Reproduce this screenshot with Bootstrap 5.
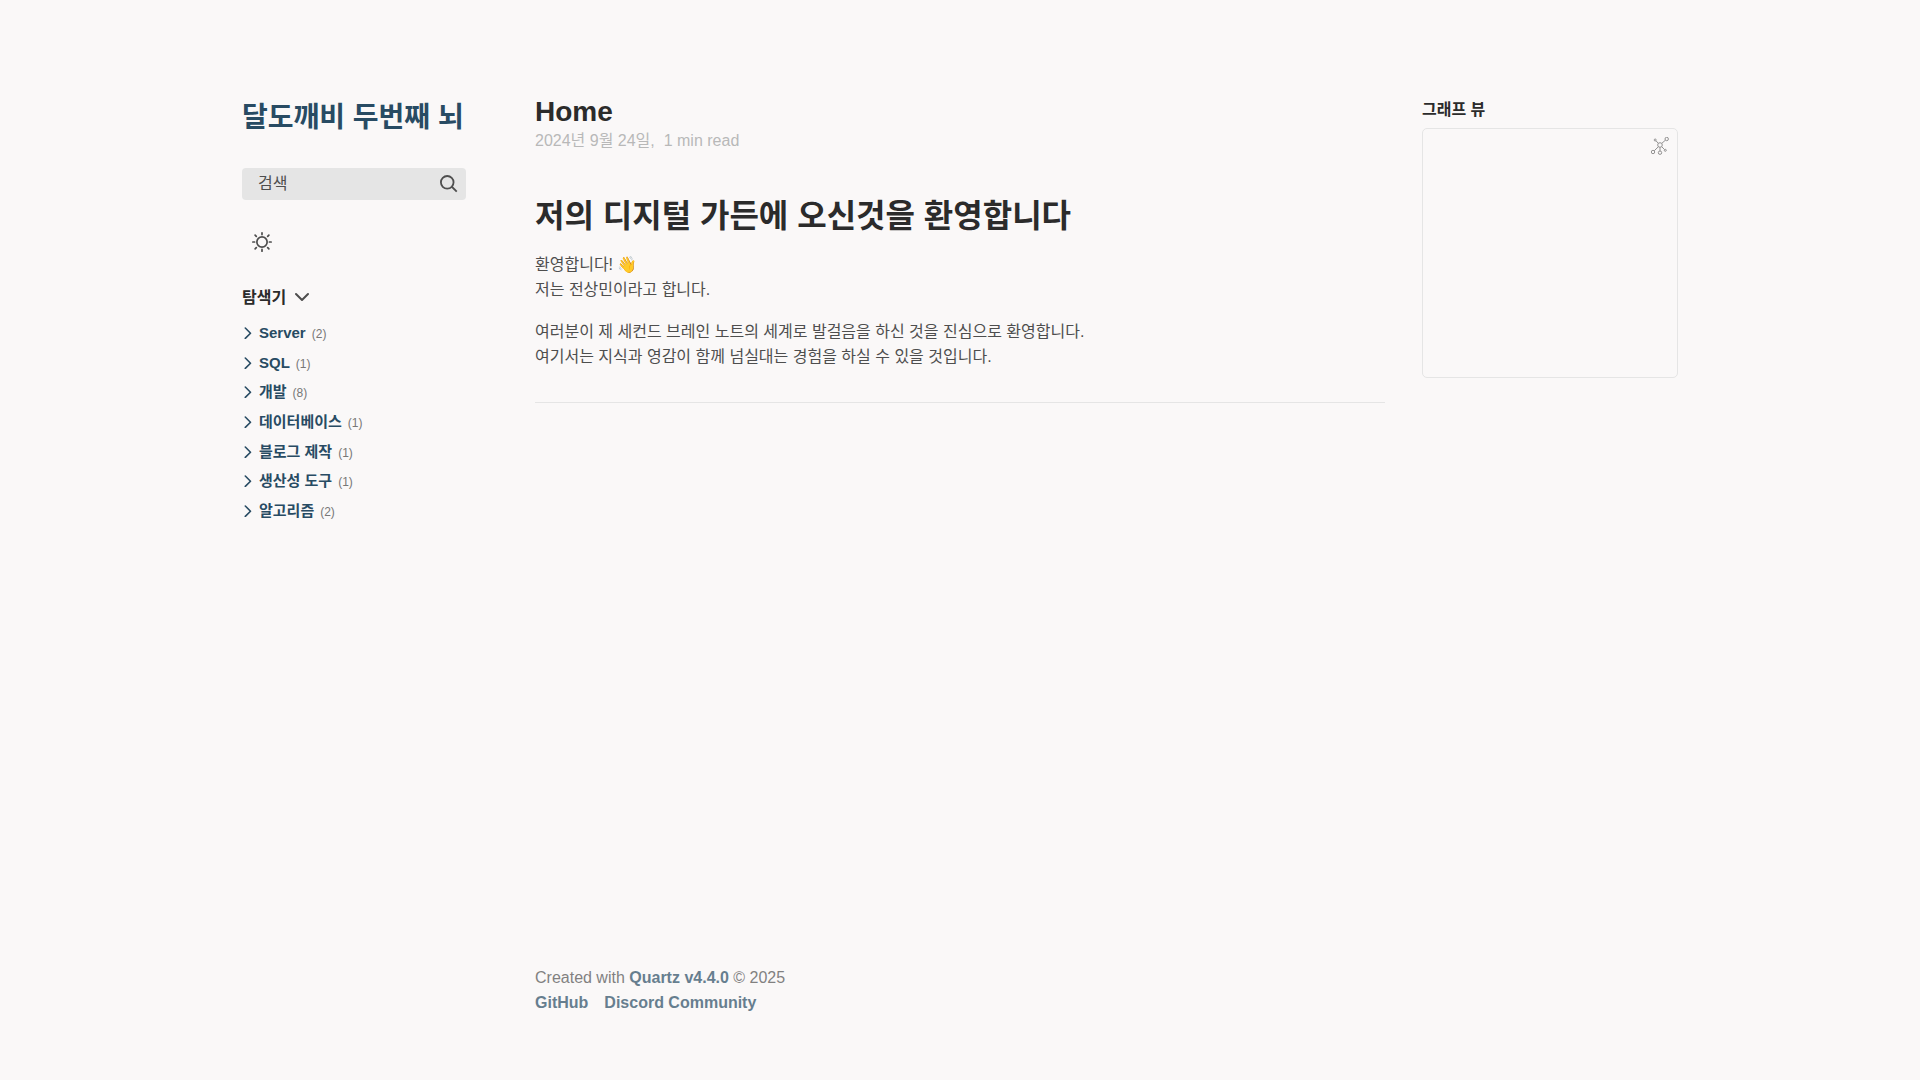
<!DOCTYPE html>
<html lang="ko">
<head>
<meta charset="utf-8">
<meta name="viewport" content="width=device-width, initial-scale=1">
<title>Home</title>
<link rel="stylesheet" href="https://cdn.jsdelivr.net/npm/bootstrap@5.3.0/dist/css/bootstrap.min.css">
<style>
:root { --page: #faf8f8; --line: #e5e5e5; --muted: #b8b8b8; --ink: #4e4e4e; --dark: #2b2b2b; --accent: #284b63; }
html { text-rendering: optimizeLegibility; }
body { background: var(--page); color: var(--ink); font-family: "Liberation Sans", "Noto Sans CJK KR", sans-serif; font-size: 16px; line-height: 25px; }
a { color: var(--accent); text-decoration: none; font-weight: 700; }
svg { display: block; fill: none; stroke: currentColor; }
.site { max-width: 1500px; gap: 5px; }
.side { flex: 0 0 320px; padding: 96px 32px 32px; }
.center { min-width: 0; padding-top: 96px; padding-bottom: 65px; }
.brand { min-width: 224px; }
.site-title { font-size: 28px; line-height: 44px; margin-bottom: 28px; }
.search-btn { background: var(--line); color: var(--ink); height: 32px; padding: 0 8px 0 16px; line-height: 30px; border: 0; border-radius: 4px; }
.plain-btn { background: none; border: 0; padding: 0; color: inherit; }
.theme-btn { padding: 0 10px; }
.tree-btn { color: var(--dark); gap: 9px; }
.tree-btn svg { color: var(--ink); }
h2, .tree-btn { font-size: 16px; font-weight: 700; line-height: 28px; }
h1, h2 { color: var(--dark); font-weight: 700; margin: 0; }
.folders { height: 208px; }
.folder { font-size: 15px; line-height: 24px; color: var(--accent); }
.folder a { margin: 0 6px 0 5px; }
.count { font-size: 12px; color: #777; padding-top: 2px; }
.page-title { font-size: 28px; line-height: 32px; }
.meta { color: var(--muted); line-height: 26px; }
.lead-title { font-size: 32px; line-height: 48px; margin: 38px 0 12px; }
.center p { margin-bottom: 17px; }
.rule { border: 0; border-top: 1px solid var(--line); opacity: 1; margin: 33px 0 0; }
.graph { height: 250px; border: 1px solid var(--line); border-radius: 5px; margin-top: 4px; }
.graph button { color: var(--ink); opacity: .6; margin: 8px; }
footer { opacity: .7; }
</style>
</head>
<body>
<div class="site d-flex min-vh-100 mx-auto">
  <aside class="side d-flex flex-column align-items-start">
    <div class="brand d-flex flex-column">
      <a class="site-title" href="#">달도깨비 두번째 뇌</a>
      <button class="search-btn d-flex justify-content-between align-items-center" type="button" id="search">
        <span>검색</span>
        <svg width="18" height="18" viewBox="0 0 19.9 19.7" stroke-width="2" aria-hidden="true"><path d="M18.5 18.3l-5.4-5.4"/><circle cx="8" cy="8" r="7"/></svg>
      </button>
    </div>
    <button class="plain-btn theme-btn mt-4 pt-2" type="button" aria-label="테마 전환">
      <svg width="20" height="20" viewBox="0 0 35 35" stroke-width="3" stroke-linecap="round"><circle cx="17.5" cy="17.5" r="9"/><path d="M1.5 17.5h3M30.500 17.5h3M17.5 1.500v3M17.5 30.500v3M5.500 5.500l2 2M27.500 27.500l2 2M5.500 29.500l2-2M27.500 7.500l2-2"/></svg>
    </button>
    <button class="plain-btn tree-btn d-flex align-items-center mt-4 pt-2" type="button" aria-expanded="true" aria-controls="tree">
      탐색기
      <svg width="14" height="14" viewBox="0 0 14 14" stroke-width="2" stroke-linecap="round" stroke-linejoin="round"><path d="M1 3l6 6 6-6"/></svg>
    </button>
    <ul class="folders list-unstyled d-flex flex-column justify-content-between mt-1 mb-0 pt-1" id="tree"></ul>
  </aside>

  <div class="center flex-grow-1 d-flex flex-column">
    <main>
      <h1 class="page-title">Home</h1>
      <div class="meta"><time datetime="2024-09-24">2024년 9월 24일, </time>&nbsp;1 min read</div>
      <article>
        <h1 class="lead-title">저의 디지털 가든에 오신것을 환영합니다</h1>
        <p>환영합니다! 👋<br>저는 전상민이라고 합니다.</p>
        <p>여러분이 제 세컨드 브레인 노트의 세계로 발걸음을 하신 것을 진심으로 환영합니다.<br>여기서는 지식과 영감이 함께 넘실대는 경험을 하실 수 있을 것입니다.</p>
      </article>
      <hr class="rule">
    </main>
    <footer class="mt-auto">
      <div>Created with <a href="#">Quartz v4.4.0</a> © 2025</div>
      <div class="d-flex gap-3"><a href="#">GitHub</a><a href="#">Discord Community</a></div>
    </footer>
  </div>

  <aside class="side">
    <h2>그래프 뷰</h2>
    <div class="graph d-flex justify-content-end align-items-start">
      <button class="plain-btn" type="button" aria-label="전체 그래프">
        <svg width="18" height="18" viewBox="0 0 18 18" stroke-width="1"><circle cx="9" cy="8" r="2.300"/><circle cx="15.700" cy="2" r="1.700"/><circle cx="2" cy="15" r="1.700"/><circle cx="9" cy="15.700" r="1.700"/><circle cx="4.200" cy="3" r="1"/><circle cx="14.300" cy="13.300" r="1"/><path d="M10.700 6.400l3.700-3.200M7.400 9.700l-4.200 4.100M9 10.300v3.700M7.300 6.300L5 3.800M10.700 9.700l2.900 2.900"/></svg>
      </button>
    </div>
  </aside>
</div>
<script src="https://cdn.jsdelivr.net/npm/bootstrap@5.3.0/dist/js/bootstrap.bundle.min.js"></script>
<script>
const folders = [['Server', 2], ['SQL', 1], ['개발', 8], ['데이터베이스', 1], ['블로그 제작', 1], ['생산성 도구', 1], ['알고리즘', 2]];
document.getElementById('tree').innerHTML = folders.map(([name, count]) => `
  <li class="folder d-flex align-items-center">
    <svg width="12" height="12" viewBox="0 0 12 12" stroke-width="1.600" stroke-linecap="round" stroke-linejoin="round"><path d="M3.300 1.500l5.200 5.200-5.200 5.200" transform="translate(0 -.5)"/></svg>
    <a href="#">${name}</a><span class="count">(${count})</span>
  </li>`).join('');
</script>
</body>
</html>
